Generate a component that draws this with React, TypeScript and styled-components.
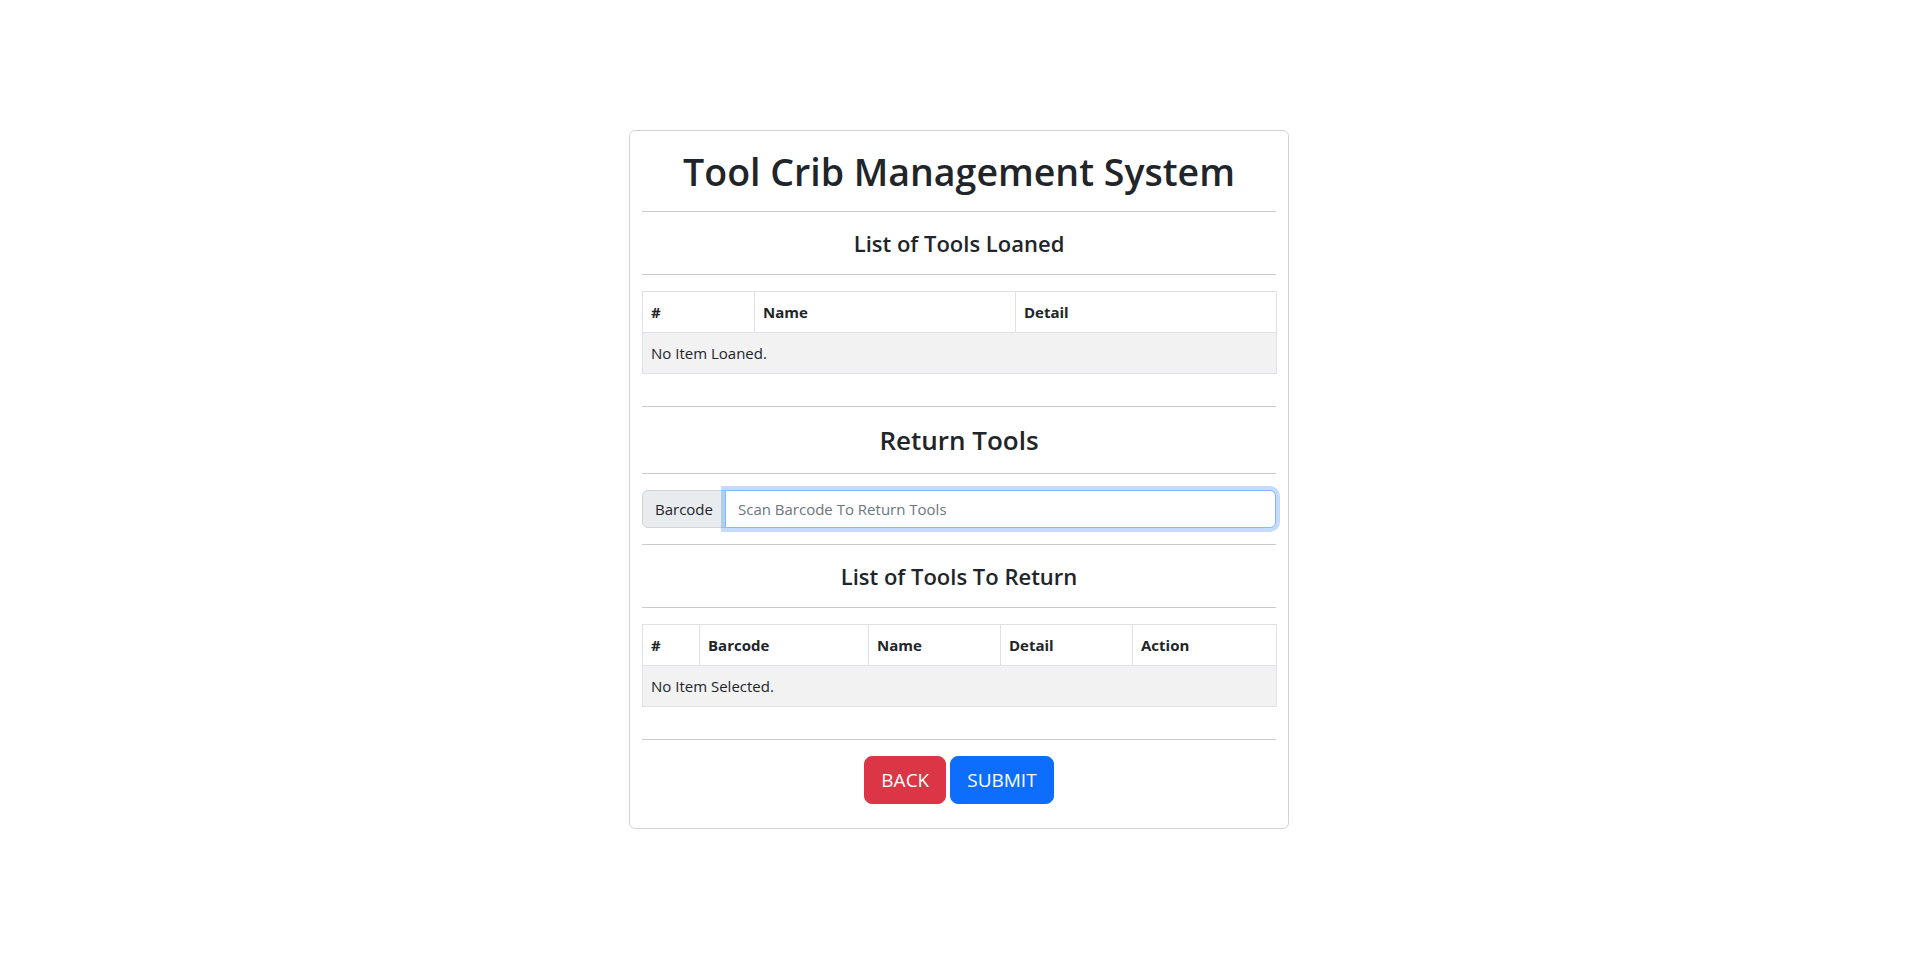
import styled, { createGlobalStyle } from "styled-components";

const GlobalStyle = createGlobalStyle`
  * {
    box-sizing: border-box;
  }
  body {
    margin: 0;
    background: #ffffff;
    color: #212529;
    font-family: "Open Sans", "Noto Sans", "Liberation Sans", sans-serif;
    font-size: 15px;
    line-height: 24px;
  }
`;

const Page = styled.div`
  display: flex;
  justify-content: center;
  padding-top: 130px;
`;

const Card = styled.div`
  display: flex;
  flex-direction: column;
  width: 660px;
  border: 1px solid rgba(0, 0, 0, 0.175);
  border-radius: 6px;
  padding: 16px 12px 24px;
`;

const Title = styled.h1`
  margin: 1px 0 0;
  font-size: 37.5px;
  font-weight: 600;
  line-height: 47px;
  text-align: center;
`;

const SectionTitle = styled.h4<{ $size: number; $line: number }>`
  margin: 0;
  font-size: ${(p) => p.$size}px;
  font-weight: 600;
  line-height: ${(p) => p.$line}px;
  text-align: center;
`;

const Divider = styled.hr`
  width: 100%;
  margin: 16px 0;
  border: 0;
  border-top: 1px solid #c9cacb;
`;

const Table = styled.table`
  width: 100%;
  table-layout: fixed;
  border-collapse: collapse;
  margin-bottom: 16px;

  th,
  td {
    padding: 8px;
    border: 1px solid #dee2e6;
    text-align: left;
    vertical-align: top;
  }
  th {
    font-weight: 700;
  }
  td {
    background: #f2f2f2;
  }
`;

const InputGroup = styled.div`
  display: flex;
  height: 38px;
`;

const GroupLabel = styled.span`
  display: flex;
  align-items: center;
  padding: 6px 12px;
  background: #e9ecef;
  border: 1px solid #ced4da;
  border-radius: 6px 0 0 6px;
  white-space: nowrap;
`;

const BarcodeInput = styled.input`
  flex: 1;
  min-width: 0;
  margin-left: -1px;
  padding: 6px 12px;
  font: inherit;
  color: #212529;
  border: 1px solid #86b7fe;
  border-radius: 0 6px 6px 0;
  box-shadow: 0 0 0 4px rgba(13, 110, 253, 0.25);
  outline: none;

  &::placeholder {
    color: #6c757d;
  }
`;

const Actions = styled.div`
  display: flex;
  justify-content: center;
  gap: 4px;
`;

const Button = styled.button<{ $color: string }>`
  height: 48px;
  padding: 0 16px;
  font-family: inherit;
  font-size: 19px;
  line-height: 1.5;
  color: #ffffff;
  background: ${(p) => p.$color};
  border: 1px solid ${(p) => p.$color};
  border-radius: 8px;
  cursor: pointer;
`;

const App = () => {
  return (
    <>
      <GlobalStyle />
      <Page>
        <Card>
          <Title>Tool Crib Management System</Title>
          <Divider />
          <SectionTitle $size={22} $line={30}>
            List of Tools Loaned
          </SectionTitle>
          <Divider />
          <Table>
            <colgroup>
              <col style={{ width: 112 }} />
              <col style={{ width: 261 }} />
              <col style={{ width: 261 }} />
            </colgroup>
            <thead>
              <tr>
                <th>#</th>
                <th>Name</th>
                <th>Detail</th>
              </tr>
            </thead>
            <tbody>
              <tr>
                <td colSpan={3}>No Item Loaned.</td>
              </tr>
            </tbody>
          </Table>
          <Divider />
          <SectionTitle $size={26} $line={34}>
            Return Tools
          </SectionTitle>
          <Divider />
          <InputGroup>
            <GroupLabel>Barcode</GroupLabel>
            <BarcodeInput placeholder="Scan Barcode To Return Tools" />
          </InputGroup>
          <Divider />
          <SectionTitle $size={22} $line={30}>
            List of Tools To Return
          </SectionTitle>
          <Divider />
          <Table>
            <colgroup>
              <col style={{ width: 57 }} />
              <col style={{ width: 169 }} />
              <col style={{ width: 132 }} />
              <col style={{ width: 132 }} />
              <col style={{ width: 144 }} />
            </colgroup>
            <thead>
              <tr>
                <th>#</th>
                <th>Barcode</th>
                <th>Name</th>
                <th>Detail</th>
                <th>Action</th>
              </tr>
            </thead>
            <tbody>
              <tr>
                <td colSpan={5}>No Item Selected.</td>
              </tr>
            </tbody>
          </Table>
          <Divider />
          <Actions>
            <Button $color="#dc3545">BACK</Button>
            <Button $color="#0d6efd">SUBMIT</Button>
          </Actions>
        </Card>
      </Page>
    </>
  );
};

export default App;
